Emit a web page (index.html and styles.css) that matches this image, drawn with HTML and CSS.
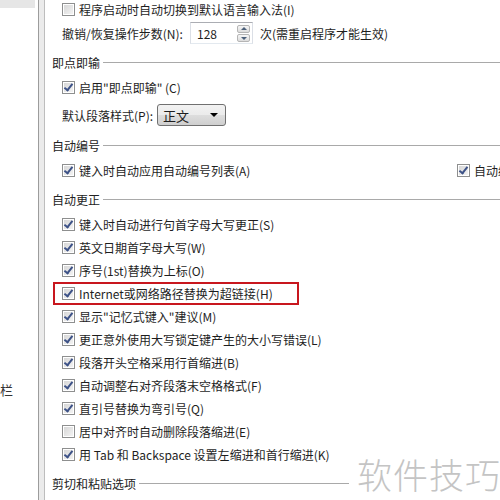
FILE: index.html
```html
<!DOCTYPE html>
<html>
<head>
<meta charset="utf-8">
<link rel="stylesheet" href="styles.css">
</head>
<body>
<div class="window">
  <aside class="sidebar">
    <div class="sel"></div>
    <div class="side-text">栏</div>
  </aside>
  <div class="divider"></div>
  <main class="content">
    <div class="row first"><span class="cb"></span><span>程序启动时自动切换到默认语言输入法(I)</span></div>
    <div class="row spin-row">
      <span class="lbl-spin">撤销/恢复操作步数(N):</span>
      <span class="spin"><span class="spin-val">128</span><span class="spin-btns"><span class="sb up"></span><span class="sb down"></span></span></span>
      <span class="after">次(需重启程序才能生效)</span>
    </div>
    <div class="hdr"><span>即点即输</span><span class="line"></span></div>
    <div class="row r3"><span class="cb on"></span><span>启用"即点即输" (C)</span></div>
    <div class="row drop-row">
      <span class="lbl-drop">默认段落样式(P):</span>
      <span class="drop"><span>正文</span><span class="arrow"></span></span>
    </div>
    <div class="hdr h2"><span>自动编号</span><span class="line"></span></div>
    <div class="row r3 two">
      <span class="item"><span class="cb on"></span><span>键入时自动应用自动编号列表(A)</span></span>
      <span class="item"><span class="cb on"></span><span>自动编号</span></span>
    </div>
    <div class="hdr"><span>自动更正</span><span class="line"></span></div>
    <div class="list">
      <div class="row"><span class="cb on"></span><span>键入时自动进行句首字母大写更正(S)</span></div>
      <div class="row"><span class="cb on"></span><span>英文日期首字母大写(W)</span></div>
      <div class="row"><span class="cb on"></span><span>序号(1st)替换为上标(O)</span></div>
      <div class="row mark"><span class="cb on"></span><span>Internet或网络路径替换为超链接(H)</span><span class="redbox"></span></div>
      <div class="row"><span class="cb on"></span><span>显示"记忆式键入"建议(M)</span></div>
      <div class="row"><span class="cb on"></span><span>更正意外使用大写锁定键产生的大小写错误(L)</span></div>
      <div class="row"><span class="cb on"></span><span>段落开头空格采用行首缩进(B)</span></div>
      <div class="row"><span class="cb on"></span><span>自动调整右对齐段落末空格格式(F)</span></div>
      <div class="row"><span class="cb on"></span><span>直引号替换为弯引号(Q)</span></div>
      <div class="row"><span class="cb"></span><span>居中对齐时自动删除段落缩进(E)</span></div>
      <div class="row"><span class="cb on"></span><span>用 Tab 和 Backspace 设置左缩进和首行缩进(K)</span></div>
    </div>
    <div class="hdr last"><span>剪切和粘贴选项</span><span class="line"></span></div>
  </main>
  <div class="watermark">软件技巧</div>
</div>
</body>
</html>
```
FILE: styles.css
```css
html, body {
  margin: 0;
  padding: 0;
  background: #fff;
}
body {
  width: 500px;
  height: 500px;
  overflow: hidden;
  font-family: "Noto Sans CJK SC", "Noto Sans", sans-serif;
  font-size: 12px;
  color: #1e1e1e;
}
.window {
  position: relative;
  display: flex;
  width: 500px;
  height: 500px;
  overflow: hidden;
}
.sidebar {
  width: 38px;
  flex: none;
  display: flex;
  flex-direction: column;
}
.sel {
  width: 35px;
  height: 8px;
  background: #e6e6e6;
}
.side-text {
  margin-top: 374px;
  font-size: 13px;
  line-height: 16px;
  color: #333;
}
.divider {
  width: 5px;
  flex: none;
  background: #ebebeb;
  border-left: 1px solid #9c9c9c;
  border-right: 1px solid #bdbdbd;
}
.content {
  flex: 1;
  padding-left: 7px;
  min-width: 0;
}
.row {
  height: 23px;
  display: flex;
  align-items: center;
  padding-left: 10px;
  white-space: nowrap;
  position: relative;
}
.row.first { margin-top: -2px; }
.cb {
  width: 11px;
  height: 11px;
  flex: none;
  border: 1px solid #8e8f8f;
  margin-right: 4px;
  box-shadow: inset 0 0 0 1px #fff;
  background: linear-gradient(135deg, #d4d4d4, #f6f6f6);
  position: relative;
}
.cb.on::after {
  content: "";
  position: absolute;
  left: 3px;
  top: 0px;
  width: 3px;
  height: 7px;
  border-right: 2px solid #3d5287;
  border-bottom: 2px solid #3d5287;
  transform: rotate(38deg);
}
.spin-row { height: 24px; }
.lbl-spin { width: 128px; flex: none; }
.spin {
  width: 61px;
  height: 20px;
  border: 1px solid #abadb3;
  border-left-color: #dbdfe6;
  border-right-color: #dbdfe6;
  border-bottom-color: #e3e9ef;
  display: flex;
  align-items: center;
  justify-content: space-between;
  box-sizing: content-box;
}
.spin-val { padding-left: 6px; font-size: 12px; }
.spin-btns {
  display: flex;
  flex-direction: column;
  gap: 1px;
  margin-right: 2px;
}
.sb {
  width: 13px;
  height: 8px;
  border: 1px solid #b5b5b5;
  border-radius: 2px;
  background: linear-gradient(#f6f6f6, #dcdcdc);
  box-sizing: border-box;
  position: relative;
}
.sb::after {
  content: "";
  position: absolute;
  left: 3px;
  width: 0;
  height: 0;
  border-left: 3px solid transparent;
  border-right: 3px solid transparent;
}
.sb.up::after { top: 1px; border-bottom: 3px solid #4c607a; }
.sb.down::after { top: 2px; border-top: 3px solid #4c607a; }
.after { margin-left: 7px; }
.hdr {
  height: 22px;
  display: flex;
  align-items: center;
  margin-top: 6px;
  white-space: nowrap;
  color: #222;
}
.hdr .line {
  flex: 1;
  height: 0;
  border-top: 1px solid #a9a9a9;
  margin-left: 3px;
}
.hdr.h2 { margin-top: 7px; }
.hdr.last { width: 297px; }
.row.r3 { margin-top: 3px; }
.drop-row { height: 24px; margin-top: 4px; }
.lbl-drop { width: 95px; flex: none; }
.drop {
  width: 69px;
  height: 22px;
  box-sizing: border-box;
  border: 1px solid #707070;
  border-radius: 3px;
  background: linear-gradient(#f2f2f2 0%, #ebebeb 50%, #dddddd 51%, #cfcfcf 100%);
  display: flex;
  align-items: center;
  justify-content: space-between;
  padding: 0 7px 0 5px;
  font-size: 13px;
}
.arrow {
  width: 0;
  height: 0;
  border-left: 4px solid transparent;
  border-right: 4px solid transparent;
  border-top: 4px solid #000;
}
.two {
  display: grid;
  grid-template-columns: 395px auto;
}
.item { display: flex; align-items: center; }
.list { margin-top: 3px; }
.redbox {
  position: absolute;
  left: 1px;
  top: 0;
  width: 246px;
  height: 23px;
  box-sizing: border-box;
  border: 2px solid #c8171e;
}
.watermark {
  position: absolute;
  left: 357px;
  top: 448px;
  font-size: 35px;
  font-weight: 300;
  letter-spacing: 1px;
  color: #c4c4c4;
  white-space: nowrap;
}
```
